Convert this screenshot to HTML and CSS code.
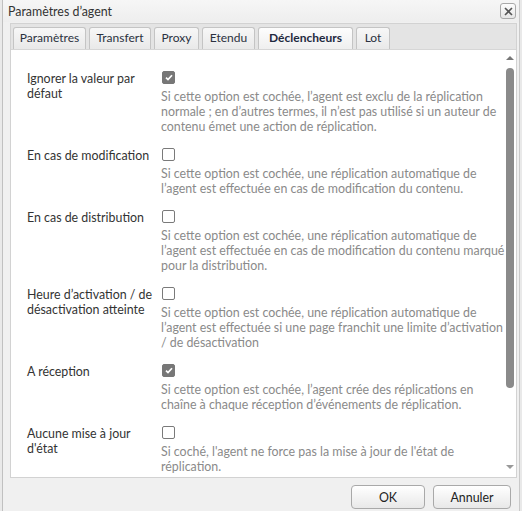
FILE: index.html
```html
<!DOCTYPE html>
<html lang="fr">
<head>
<meta charset="utf-8">
<title>Paramètres d'agent</title>
<link rel="stylesheet" href="styles.css">
</head>
<body>
<div class="dialog">
  <div class="titlebar">
    <span class="title">Paramètres d’agent</span>
    <span class="close"><svg width="9" height="9" viewBox="0 0 9 9"><path d="M1 1L8 8M8 1L1 8" stroke="#555" stroke-width="1.6"/></svg></span>
  </div>
  <div class="tabpanel">
    <div class="tabstrip">
      <div class="tab">Paramètres</div>
      <div class="tab">Transfert</div>
      <div class="tab">Proxy</div>
      <div class="tab">Etendu</div>
      <div class="tab active">Déclencheurs</div>
      <div class="tab">Lot</div>
    </div>
    <div class="body">
      <div class="rows">
        <div class="row">
          <div class="label">Ignorer la valeur par<br>défaut</div>
          <div class="field">
            <span class="cb checked"><svg width="8" height="7" viewBox="0 0 8 7"><path d="M1 3.6L3 5.6L7 1.2" fill="none" stroke="#fff" stroke-width="1.7"/></svg></span>
            <div class="desc">Si cette option est cochée, l’agent est exclu de la réplication<br>normale ; en d’autres termes, il n’est pas utilisé si un auteur de<br>contenu émet une action de réplication.</div>
          </div>
        </div>
        <div class="row">
          <div class="label">En cas de modification</div>
          <div class="field">
            <span class="cb"></span>
            <div class="desc">Si cette option est cochée, une réplication automatique de<br>l’agent est effectuée en cas de modification du contenu.</div>
          </div>
        </div>
        <div class="row">
          <div class="label">En cas de distribution</div>
          <div class="field">
            <span class="cb"></span>
            <div class="desc">Si cette option est cochée, une réplication automatique de<br>l’agent est effectuée en cas de modification du contenu marqué<br>pour la distribution.</div>
          </div>
        </div>
        <div class="row">
          <div class="label">Heure d’activation / de<br>désactivation atteinte</div>
          <div class="field">
            <span class="cb"></span>
            <div class="desc">Si cette option est cochée, une réplication automatique de<br>l’agent est effectuée si une page franchit une limite d’activation<br>/ de désactivation</div>
          </div>
        </div>
        <div class="row">
          <div class="label">A réception</div>
          <div class="field">
            <span class="cb checked"><svg width="8" height="7" viewBox="0 0 8 7"><path d="M1 3.6L3 5.6L7 1.2" fill="none" stroke="#fff" stroke-width="1.7"/></svg></span>
            <div class="desc">Si cette option est cochée, l’agent crée des réplications en<br>chaîne à chaque réception d’événements de réplication.</div>
          </div>
        </div>
        <div class="row">
          <div class="label">Aucune mise à jour<br>d'état</div>
          <div class="field">
            <span class="cb"></span>
            <div class="desc">Si coché, l'agent ne force pas la mise à jour de l'état de<br>réplication.</div>
          </div>
        </div>
      </div>
      <div class="scrollbar">
        <span class="arrow up"></span>
        <span class="thumb"></span>
        <span class="arrow down"></span>
      </div>
    </div>
  </div>
  <div class="footer">
    <button class="btn btn-ok">OK</button>
    <button class="btn btn-cancel">Annuler</button>
  </div>
</div>
</body>
</html>
```
FILE: styles.css
```css
html, body {
  margin: 0;
  padding: 0;
  background: #e9e9e9;
}
body {
  width: 522px;
  height: 511px;
  overflow: hidden;
  font-family: "Lato", "Open Sans", sans-serif;
  font-size: 12.4px;
  color: #333;
}
.dialog {
  margin-left: 2px;
  width: 516px;
  height: 511px;
  background: #f0f0f0;
  border-left: 1px solid #c0c0c0;
  border-right: 1px solid #c9c9c9;
  display: flex;
  flex-direction: column;
}
.titlebar {
  height: 22px;
  display: flex;
  align-items: center;
  justify-content: space-between;
  padding: 0 3px 0 5px;
  background: linear-gradient(#f6f6f6, #eeeeee);
}
.title {
  font-size: 12.4px;
  color: #333;
}
.close {
  width: 14px;
  height: 14px;
  border: 1px solid #a9a9a9;
  border-radius: 3px;
  background: linear-gradient(#fdfdfd, #e6e6e6);
  display: flex;
  align-items: center;
  justify-content: center;
}
.tabpanel {
  margin: 1px 2px 0 7px;
  border: 1px solid #d2d2d2;
  display: flex;
  flex-direction: column;
  height: 453px;
}
.tabstrip {
  height: 25px;
  background: #e4e4e4;
  display: grid;
  grid-template-columns: 73px 62px 45px 53px 95px 34px;
  align-items: end;
  column-gap: 3px;
  padding-left: 2px;
  border-bottom: 1px solid #d6d6d6;
}
.tab {
  box-sizing: border-box;
  height: 22px;
  line-height: 19px;
  text-align: center;
  font-size: 12px;
  border: 1px solid #c4c4c4;
  border-bottom: none;
  border-radius: 3px 3px 0 0;
  background: linear-gradient(#f7f7f7, #e9e9e9);
  color: #2b3140;
}
.tab.active {
  font-weight: bold;
  color: #1f2a3f;
  background: linear-gradient(#fdfdfd, #efefef);
}
.body {
  flex: 1;
  background: #fff;
  display: flex;
  overflow: hidden;
}
.rows {
  flex: 1;
  padding: 18px 0 0 16px;
  display: flex;
  flex-direction: column;
  gap: 11px;
}
.row {
  display: grid;
  grid-template-columns: 134px 1fr;
}
.label {
  line-height: 15px;
  margin-top: 3px;
  color: #333;
}
.field {
  display: flex;
  flex-direction: column;
}
.cb {
  width: 11px;
  height: 11px;
  border: 1px solid #7a7a7a;
  border-radius: 2px;
  background: #fff;
  margin: 3px 0 5px 1px;
  display: flex;
  align-items: center;
  justify-content: center;
}
.cb.checked {
  background: #777;
  border-color: #777;
}
.desc {
  color: #8a8a8a;
  line-height: 15px;
  white-space: nowrap;
}
.scrollbar {
  width: 14px;
  display: flex;
  flex-direction: column;
  align-items: center;
  padding-right: 1px;
}
.arrow {
  width: 0;
  height: 0;
  border-left: 4px solid transparent;
  border-right: 4px solid transparent;
}
.arrow.up {
  margin-top: 6px;
  border-bottom: 4px solid #777;
}
.arrow.down {
  margin-top: auto;
  margin-bottom: 8px;
  border-top: 4px solid #999;
}
.thumb {
  margin-top: 8px;
  width: 8px;
  height: 320px;
  border-radius: 4px;
  background: #8a8a8a;
}
.footer {
  display: flex;
  justify-content: flex-end;
  gap: 8px;
  padding: 7px 8px 0 0;
}
.btn {
  height: 24px;
  font-family: "Lato", "Open Sans", sans-serif;
  font-size: 12.4px;
  color: #222;
  border: 1px solid #a9a9a9;
  border-radius: 4px;
  background: linear-gradient(#ffffff, #e8e8e8);
  padding: 0;
}
.btn-ok { width: 74px; }
.btn-cancel { width: 78px; }
```
